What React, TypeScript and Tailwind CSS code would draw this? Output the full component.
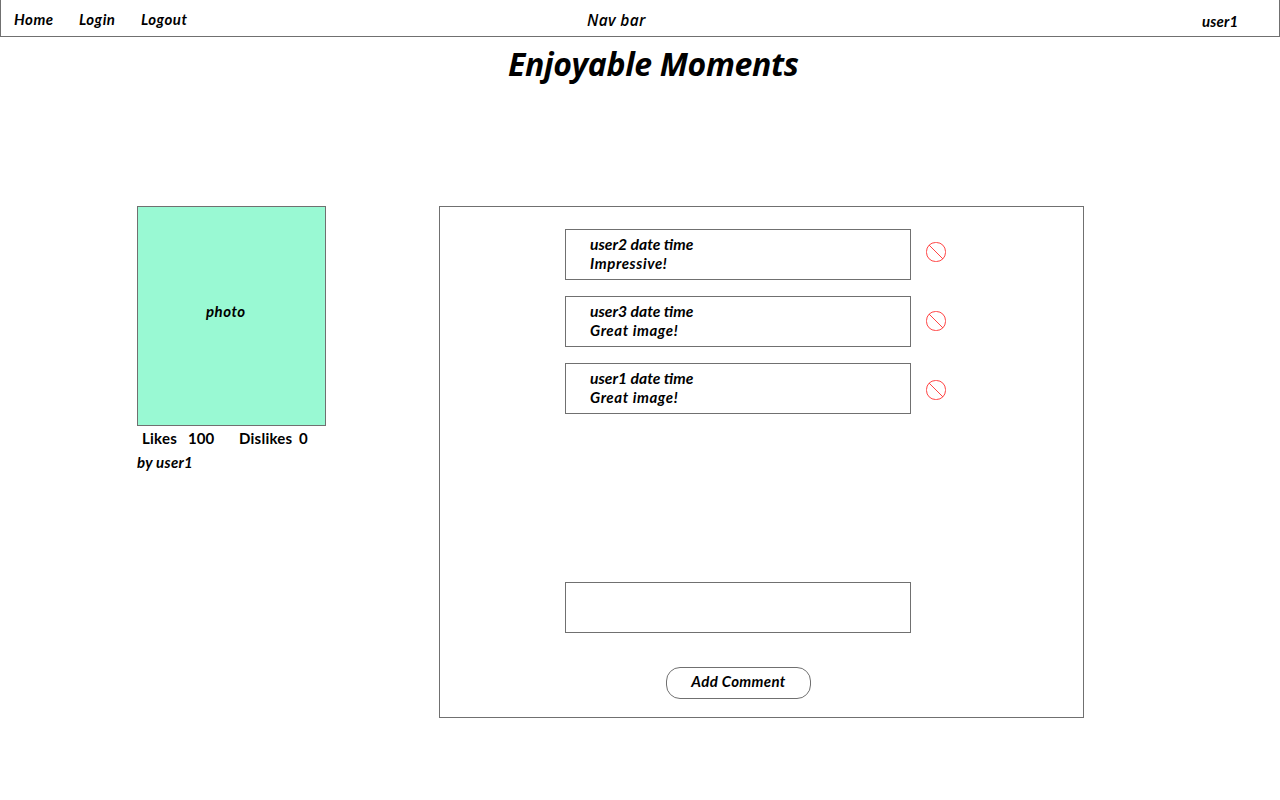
import React from "react";

const comments = [
  { id: 1, author: "user2", body: "Impressive!", icon: "mt-[13px]" },
  { id: 2, author: "user3", body: "Great image!", icon: "mt-[15px]" },
  { id: 3, author: "user1", body: "Great image!", icon: "mt-[17px]" },
];

function BlockIcon() {
  return (
    <svg width="20" height="20" viewBox="0 0 20 20" fill="none" stroke="#ff4545" strokeWidth="1">
      <rect x="0.5" y="0.5" width="19" height="19" rx="9" />
      <path d="M3 3 17 17" />
    </svg>
  );
}

export default function App() {
  return (
    <div className="h-[800px] w-[1280px] overflow-hidden bg-white font-['Lato',sans-serif] text-[15px] leading-5 font-bold whitespace-nowrap text-black italic">
      <header className="flex h-[37px] border border-t-0 border-[#707070]">
        <nav className="flex pt-[9px] pl-[13px] tracking-[0.5px]">
          <a className="w-[65px]">Home</a>
          <a className="w-[62px]">Login</a>
          <a className="w-[446px]">Logout</a>
        </nav>
        <span className="w-[615px] pt-[10px] font-['Open_Sans',sans-serif] text-[15.5px] font-semibold tracking-[0.35px]">Nav bar</span>
        <span className="pt-[11px] tracking-[0.2px]">user1</span>
      </header>
      <h1 className="pt-1 pl-[508px] font-['Open_Sans',sans-serif] text-[32px] leading-[45px] tracking-[-0.34px]">Enjoyable Moments</h1>
      <main className="flex pt-[120px] pl-[137px]">
        <section className="w-[302px]">
          <div className="h-[220px] w-[189px] border border-[#707070] bg-[#99f9d3] pt-[94px] pl-[68px] tracking-[0.5px]">photo</div>
          <div className="flex pt-0.5 pl-[5px] not-italic">
            <span className="w-[46px] tracking-[0.25px]">Likes</span>
            <span className="w-[51px]">100</span>
            <span className="w-[60px] tracking-[0.25px]">Dislikes</span>
            <span>0</span>
          </div>
          <p className="pt-1 tracking-[0.3px]">by user1</p>
        </section>
        <section className="flex h-[512px] w-[645px] flex-col border border-[#707070] pt-[22px] pl-[125px]">
          <div className="flex h-[353px] flex-col gap-4">
            {comments.map((c) => (
              <div key={c.id} className="flex gap-[15px]">
                <article className="h-[51px] w-[346px] border border-[#707070] pt-[5px] pl-6 text-[15.7px] leading-[19px]">
                  <p>{c.author} date time</p>
                  <p className="text-[15px] tracking-[0.6px]">{c.body}</p>
                </article>
                <button className={`h-5 w-5 ${c.icon}`} aria-label="Delete comment">
                  <BlockIcon />
                </button>
              </div>
            ))}
          </div>
          <input className="h-[51px] w-[346px] border border-[#707070]" aria-label="Comment" />
          <button className="mt-[34px] ml-[101px] h-8 w-[145px] rounded-[14px] border border-[#707070] pb-1 tracking-[0.35px] italic">Add Comment</button>
        </section>
      </main>
    </div>
  );
}
